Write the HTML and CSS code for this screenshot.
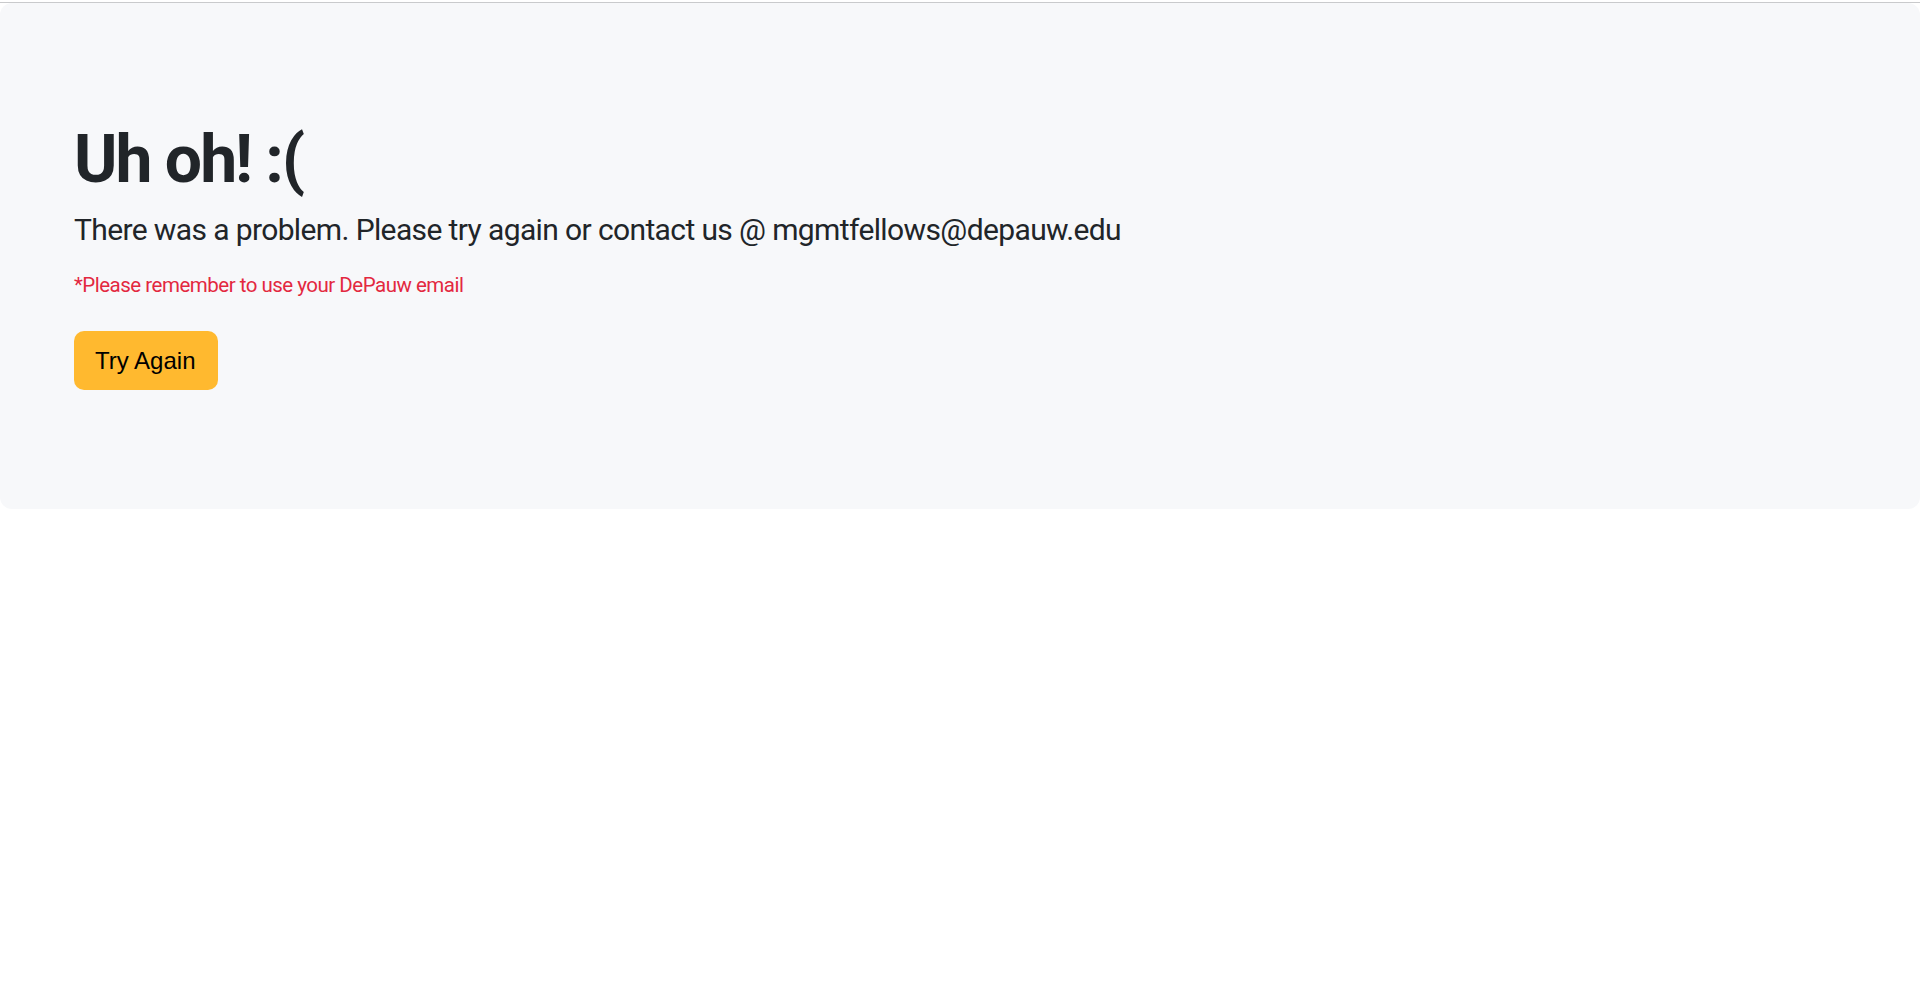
FILE: index.html
```html
<!DOCTYPE html>
<html lang="en">
<head>
<meta charset="utf-8">
<title>Uh oh!</title>
<link rel="stylesheet" href="styles.css">
</head>
<body>
<div class="topline"></div>
<main class="jumbotron">
  <h1 class="title">Uh oh! :(</h1>
  <p class="lead">There was a problem. Please try again or contact us @ mgmtfellows@depauw.edu</p>
  <p class="note">*Please remember to use your DePauw email</p>
  <button class="btn-warning" type="button">Try Again</button>
</main>
</body>
</html>
```

FILE: styles.css
```css
html, body {
  margin: 0;
  padding: 0;
  background: #ffffff;
}

body {
  font-family: Roboto, Inter, "Noto Sans", sans-serif;
  color: #212529;
}

.topline {
  height: 3px;
  border-bottom: 1px solid #c9cacc;
  box-sizing: border-box;
}

.jumbotron {
  background: #f7f8fa;
  border-radius: 12px;
  padding: 117px 74px 119px;
  display: flex;
  flex-direction: column;
  align-items: flex-start;
}

.title {
  margin: 0 0 7.5px;
  font-size: 66px;
  line-height: 1.2;
  font-weight: 700;
  letter-spacing: -2px;
}

.lead {
  margin: 0 0 18px;
  font-size: 30px;
  line-height: 1.5;
  font-weight: 400;
  letter-spacing: -0.62px;
}

.note {
  margin: 0 0 31px;
  font-size: 20.5px;
  line-height: 1.5;
  color: #e3283f;
  letter-spacing: -0.5px;
}

.btn-warning {
  font-family: "Liberation Sans", Arial, sans-serif;
  font-size: 24px;
  line-height: 36px;
  padding: 11.5px 22px 11.5px 21px;
  border: 0;
  border-radius: 10px;
  background: #ffb92f;
  color: #000;
  cursor: pointer;
}
```
